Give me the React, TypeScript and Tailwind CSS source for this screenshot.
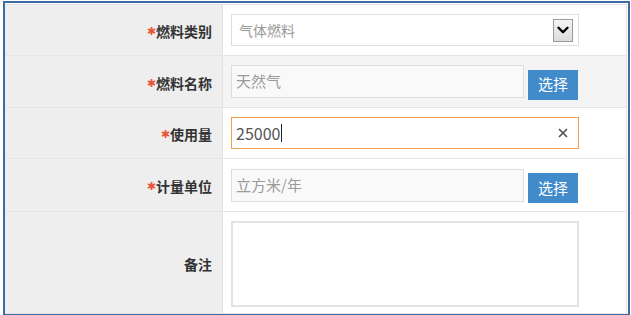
import { ChevronDown, X } from "lucide-react";

const font = { fontFamily: '"Noto Sans CJK SC", "Noto Sans", sans-serif' };

function Label({ text, required }: { text: string; required?: boolean }) {
  return (
    <div className="flex w-[218px] shrink-0 items-center justify-end border-r border-[#e2e2e2] bg-[#eeeeee] pr-[10px] pt-[3px]">
      {required && (
        <span
          className="text-[11px] leading-none text-[#e8553a]"
          style={{ fontFamily: '"DejaVu Sans", sans-serif' }}
        >
          ✱
        </span>
      )}
      <span className="text-[14px] font-bold text-[#333]">{text}</span>
    </div>
  );
}

function PickButton() {
  return (
    <button
      type="button"
      className="mt-[6px] ml-[4px] flex h-[30px] w-[50px] shrink-0 items-center justify-center bg-[#428bca] text-[15px] text-white"
    >
      选择
    </button>
  );
}

export default function App() {
  return (
    <div className="h-[315px] w-[631px] overflow-hidden bg-white pt-px pl-[3px]" style={font}>
      <div className="w-[627px] border-2 border-[#3c6ca3] bg-white pt-px pr-px">
        <div className="border-t border-r border-[#e3e3e3]">
          {/* 燃料类别 */}
          <div className="flex h-[51px] border-b border-[#e5e5e5]">
            <Label text="燃料类别" required />
            <div className="flex flex-1 items-center bg-white pl-[8px]">
              <div className="flex h-[32px] w-[348px] items-center justify-between border border-[#dddddd] bg-white pl-[7px] pr-[5px]">
                <span className="text-[14px] text-[#9a9a9a]">气体燃料</span>
                <span className="flex h-[23px] w-[20px] items-center justify-center border border-[#9a9a9a] bg-gradient-to-b from-[#f4f4f4] to-[#dcdcdc]">
                  <ChevronDown size={18} strokeWidth={3.2} className="text-black" />
                </span>
              </div>
            </div>
          </div>

          {/* 燃料名称 */}
          <div className="flex h-[52px] border-b border-[#e5e5e5]">
            <Label text="燃料名称" required />
            <div className="flex flex-1 items-center bg-[#f4f4f4] pl-[8px]">
              <div className="flex h-[33px] w-[293px] items-center border border-[#dddddd] bg-[#f9f9f9] pl-[4px]">
                <span className="text-[15px] text-[#9a9a9a]">天然气</span>
              </div>
              <PickButton />
            </div>
          </div>

          {/* 使用量 */}
          <div className="flex h-[51px] border-b border-[#e5e5e5]">
            <Label text="使用量" required />
            <div className="flex flex-1 items-center bg-white pl-[8px]">
              <div className="flex h-[32px] w-[348px] items-center justify-between border border-[#f3a04f] bg-white pl-[4px] pr-[8px]">
                <span className="flex items-center text-[16px] text-[#555]">
                  25000
                  <span className="ml-px inline-block h-[18px] w-px bg-[#222]" />
                </span>
                <X size={14} strokeWidth={3} className="text-[#555]" />
              </div>
            </div>
          </div>

          {/* 计量单位 */}
          <div className="flex h-[53px] border-b border-[#e5e5e5]">
            <Label text="计量单位" required />
            <div className="flex flex-1 items-center bg-white pl-[8px]">
              <div className="flex h-[33px] w-[293px] items-center border border-[#dddddd] bg-[#f9f9f9] pl-[4px]">
                <span className="text-[15px] text-[#9a9a9a]">立方米/年</span>
              </div>
              <PickButton />
            </div>
          </div>

          {/* 备注 */}
          <div className="flex h-[102px] border-b border-[#e5e5e5]">
            <Label text="备注" />
            <div className="flex flex-1 items-center bg-white pl-[8px] pt-[2px]">
              <div className="h-[86px] w-[348px] border-2 border-[#e3e3e3] bg-white" />
            </div>
          </div>
        </div>
      </div>
    </div>
  );
}
